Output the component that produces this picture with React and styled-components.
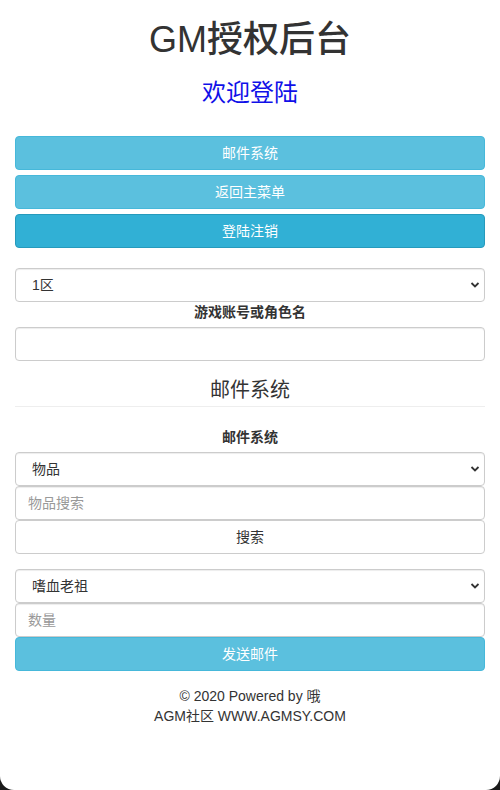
import React from "react";
import styled, { createGlobalStyle } from "styled-components";

const Global = createGlobalStyle`
  html, body { margin: 0; padding: 0; background: #1a1a1a; }
  * { box-sizing: border-box; }
  body {
    font-family: "Liberation Sans", "Noto Sans CJK SC", Arial, sans-serif;
    font-size: 14px;
    line-height: 20px;
    color: #333;
  }
`;

const Screen = styled.div`
  width: 500px;
  height: 790px;
  background: #fff;
  border-radius: 0 0 14px 14px;
  overflow: hidden;
  padding: 0 15px;
`;

const Title = styled.h1`
  margin: 20px 0 0;
  font-size: 36px;
  font-weight: 500;
  line-height: 1.1;
  text-align: center;
  color: #333;
`;

const Welcome = styled.h3`
  margin: 20px 0 30px;
  font-size: 24px;
  font-weight: 400;
  line-height: 1.1;
  text-align: center;
  color: #1010e8;
`;

const Stack = styled.div`
  display: flex;
  flex-direction: column;
  gap: ${(p) => p.$gap || 0}px;
  margin-top: ${(p) => p.$top || 0}px;
`;

const Button = styled.button`
  display: block;
  width: 100%;
  height: 34px;
  padding: 6px 12px;
  font-family: inherit;
  font-size: 14px;
  line-height: 20px;
  text-align: center;
  border-radius: 4px;
  cursor: pointer;
  border: 1px solid ${(p) => (p.$variant === "default" ? "#ccc" : p.$active ? "#269abc" : "#46b8da")};
  background: ${(p) => (p.$variant === "default" ? "#fff" : p.$active ? "#31b0d5" : "#5bc0de")};
  color: ${(p) => (p.$variant === "default" ? "#333" : "#fff")};
`;

const SelectWrap = styled.div`
  position: relative;
`;

const Select = styled.select`
  appearance: none;
  -webkit-appearance: none;
  width: 100%;
  height: 34px;
  padding: 6px 12px 6px 16px;
  font-family: inherit;
  font-size: 14px;
  color: #333;
  background: #fff;
  border: 1px solid #ccc;
  border-radius: 4px;
  box-shadow: inset 0 1px 1px rgba(0, 0, 0, 0.075);
`;

const Chevron = styled.svg`
  position: absolute;
  right: 5px;
  top: 12px;
  width: 10px;
  height: 10px;
  pointer-events: none;
`;

const Input = styled.input`
  width: 100%;
  height: 34px;
  padding: 6px 12px;
  font-family: inherit;
  font-size: 14px;
  color: #555;
  background: #fff;
  border: 1px solid #ccc;
  border-radius: 4px;
  box-shadow: inset 0 1px 1px rgba(0, 0, 0, 0.075);
  &::placeholder { color: #999; }
`;

const Label = styled.label`
  display: block;
  text-align: center;
  font-weight: 700;
  margin: ${(p) => p.$top || 0}px 0 5px;
`;

const SectionTitle = styled.h4`
  margin: 18px 0 0;
  font-size: 20px;
  font-weight: 400;
  line-height: 22px;
  text-align: center;
  padding-bottom: 5px;
  border-bottom: 1px solid #eee;
`;

const Footer = styled.footer`
  margin-top: 15px;
  text-align: center;
  line-height: 20px;
  color: #333;
`;

function Dropdown({ children }) {
  return (
    <SelectWrap>
      <Select defaultValue={children}>
        <option>{children}</option>
      </Select>
      <Chevron viewBox="0 0 10 10">
        <path d="M1.5 3 L5 6.5 L8.5 3" fill="none" stroke="#333" strokeWidth="1.8" />
      </Chevron>
    </SelectWrap>
  );
}

export default function App() {
  return (
    <>
      <Global />
      <Screen>
        <Title>GM授权后台</Title>
        <Welcome>欢迎登陆</Welcome>
        <Stack $gap={5}>
          <Button>邮件系统</Button>
          <Button>返回主菜单</Button>
          <Button $active>登陆注销</Button>
        </Stack>
        <Stack $top={20}>
          <Dropdown>1区</Dropdown>
          <Label>游戏账号或角色名</Label>
          <Input />
        </Stack>
        <SectionTitle>邮件系统</SectionTitle>
        <Label $top={20}>邮件系统</Label>
        <Stack>
          <Dropdown>物品</Dropdown>
          <Input placeholder="物品搜索" />
          <Button $variant="default">搜索</Button>
        </Stack>
        <Stack $top={15}>
          <Dropdown>嗜血老祖</Dropdown>
          <Input placeholder="数量" />
          <Button>发送邮件</Button>
        </Stack>
        <Footer>
          © 2020 Powered by 哦
          <br />
          AGM社区 WWW.AGMSY.COM
        </Footer>
      </Screen>
    </>
  );
}
